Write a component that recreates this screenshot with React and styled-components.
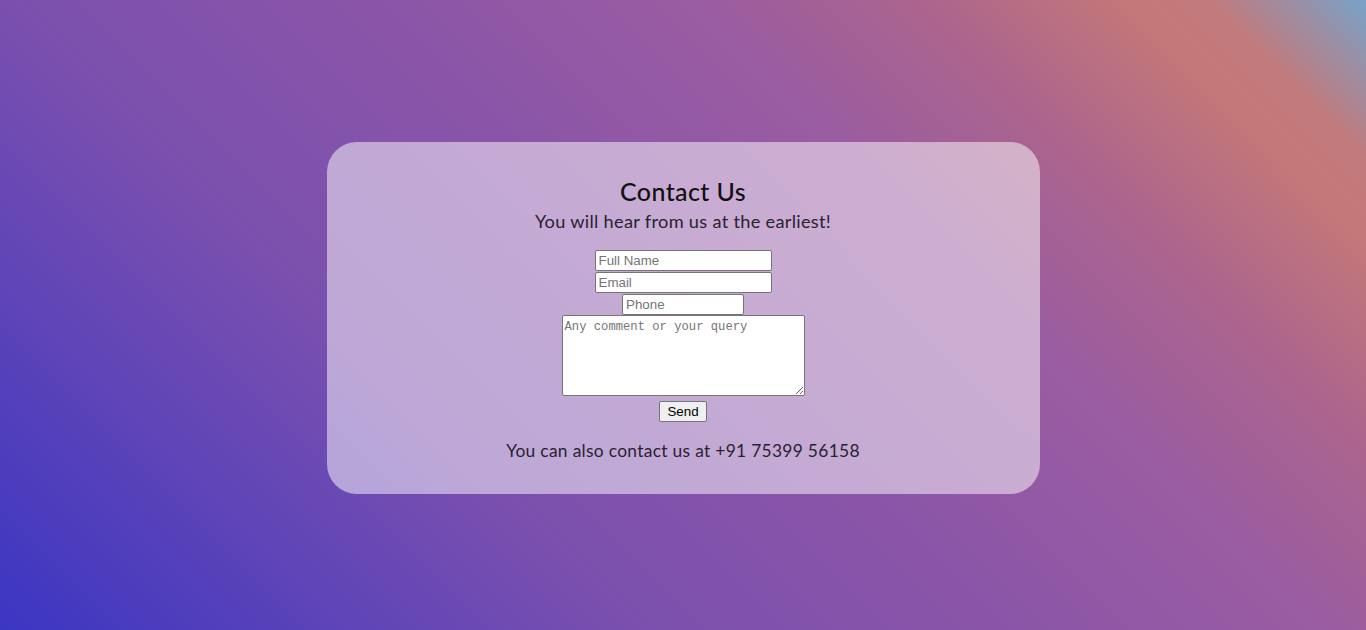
import React from 'react'
import styled, {createGlobalStyle} from 'styled-components'

const GlobalStyle = createGlobalStyle`
    html, body {
        margin: 0;
        padding: 0;
    }
    body {
        font-family: "Lato", "Noto Sans", sans-serif;
    }
`

const Page = styled.div`
    width: 100vw;
    height: 100vh;
    box-sizing: border-box;
    padding-top: 6px;
    display: flex;
    align-items: center;
    justify-content: center;
    background: linear-gradient(45deg, #3b36c3 0%, #7b50ae 32%, #8a55a8 50%, #9a5ca2 66%, #aa648e 77%, #c47878 88%, #c27a7c 92%, #78a2c8 100%);
    overflow: hidden;
`

const Card = styled.div`
    width: 713px;
    height: 352px;
    box-sizing: border-box;
    border-radius: 30px;
    background-color: rgba(255, 255, 255, 0.5);
    display: flex;
    flex-direction: column;
    align-items: center;
    padding-top: 34px;
`

const Title = styled.h1`
    margin: 0;
    font-size: 25px;
    font-weight: 500;
    color: #111;
    line-height: 30px;
    letter-spacing: 0.4px;
`

const Subtitle = styled.p`
    margin: 2px 0 0;
    font-size: 18.2px;
    color: #2a2230;
    line-height: 26px;
    letter-spacing: 0.3px;
`

const Form = styled.form`
    margin-top: 16px;
    display: flex;
    flex-direction: column;
    align-items: center;
    gap: 1px;
`

const Field = styled.input`
    width: ${props => props.$w}px;
    height: 21px;
    box-sizing: border-box;
    border: 1px solid #767676;
    border-radius: 2px;
    padding: 1px 3px;
    font-family: "Liberation Sans", Arial, sans-serif;
    font-size: 13.33px;
    background: #fff;
    &::placeholder {
        color: #757575;
    }
`

const Comment = styled.textarea`
    width: 243px;
    height: 81px;
    margin-top: -1px;
    box-sizing: border-box;
    border: 1px solid #767676;
    border-radius: 2px;
    padding: 4px 2px 2px;
    font-family: "Liberation Mono", monospace;
    font-size: 12.2px;
    background: #fff;
    &::placeholder {
        color: #757575;
    }
`

const SendButton = styled.button`
    margin-top: 4px;
    width: 48px;
    height: 21px;
    box-sizing: border-box;
    padding: 1px 6px;
    border: 1px solid #767676;
    border-radius: 2px;
    background: #efefef;
    font-family: "Liberation Sans", Arial, sans-serif;
    font-size: 13.33px;
    color: #000;
`

const Footer = styled.p`
    margin: 16px 0 0;
    font-size: 17.4px;
    color: #2a2230;
    line-height: 26px;
    letter-spacing: 0.3px;
`

const App = () => {
    return (
        <>
            <GlobalStyle />
            <Page>
                <Card>
                    <Title>Contact Us</Title>
                    <Subtitle>You will hear from us at the earliest!</Subtitle>
                    <Form onSubmit={e => e.preventDefault()}>
                        <Field $w={177} type="text" placeholder="Full Name" />
                        <Field $w={177} type="email" placeholder="Email" />
                        <Field $w={122} type="tel" placeholder="Phone" />
                        <Comment placeholder="Any comment or your query" />
                        <SendButton type="submit">Send</SendButton>
                    </Form>
                    <Footer>You can also contact us at +91 75399 56158</Footer>
                </Card>
            </Page>
        </>
    )
}

export default App
